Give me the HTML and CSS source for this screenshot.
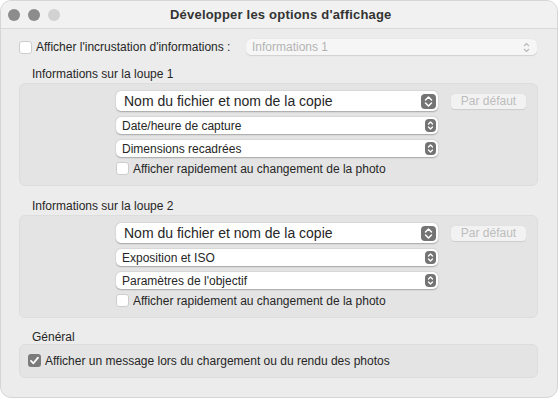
FILE: index.html
```html
<!DOCTYPE html>
<html>
<head>
    <title>Développer les options d'affichage</title>
    <link rel="stylesheet" href="styles.css">
</head>
<body>
    <div class="window">
        <div class="titlebar">
            <div class="lights">
                <span class="light dark"></span>
                <span class="light dark"></span>
                <span class="light pale"></span>
            </div>
            <div class="title">Développer les options d'affichage</div>
        </div>

        <div class="content">
            <div class="overlay-row">
                <span class="check"></span>
                <span class="overlay-label">Afficher l'incrustation d'informations :</span>
                <div class="popup disabled">
                    <span>Informations 1</span>
                    <svg class="arrows" width="9" height="11" viewBox="0 0 9 11"><path d="M2 4 L4.5 1.5 L7 4 M2 7 L4.5 9.5 L7 7" fill="none" stroke="#b8b8b8" stroke-width="1.2"/></svg>
                </div>
            </div>

            <div class="group-label">Informations sur la loupe 1</div>
            <div class="group-box loupe">
                <div class="row">
                    <div class="popup large">
                        <span>Nom du fichier et nom de la copie</span>
                        <span class="stepper big"><svg width="15" height="15" viewBox="0 0 15 15"><path d="M4.5 6 L7.5 3 L10.5 6 M4.5 9 L7.5 12 L10.5 9" fill="none" stroke="#fff" stroke-width="1.5" stroke-linecap="round" stroke-linejoin="round"/></svg></span>
                    </div>
                    <div class="btn-default">Par défaut</div>
                </div>
                <div class="popup small">
                    <span>Date/heure de capture</span>
                    <span class="stepper"><svg width="11" height="13" viewBox="0 0 11 13"><path d="M3.5 5 L5.5 3 L7.5 5 M3.5 8 L5.5 10 L7.5 8" fill="none" stroke="#fff" stroke-width="1.3" stroke-linecap="round" stroke-linejoin="round"/></svg></span>
                </div>
                <div class="popup small">
                    <span>Dimensions recadrées</span>
                    <span class="stepper"><svg width="11" height="13" viewBox="0 0 11 13"><path d="M3.5 5 L5.5 3 L7.5 5 M3.5 8 L5.5 10 L7.5 8" fill="none" stroke="#fff" stroke-width="1.3" stroke-linecap="round" stroke-linejoin="round"/></svg></span>
                </div>
                <div class="check-row">
                    <span class="check"></span>
                    <span>Afficher rapidement au changement de la photo</span>
                </div>
            </div>

            <div class="group-label second">Informations sur la loupe 2</div>
            <div class="group-box loupe">
                <div class="row">
                    <div class="popup large">
                        <span>Nom du fichier et nom de la copie</span>
                        <span class="stepper big"><svg width="15" height="15" viewBox="0 0 15 15"><path d="M4.5 6 L7.5 3 L10.5 6 M4.5 9 L7.5 12 L10.5 9" fill="none" stroke="#fff" stroke-width="1.5" stroke-linecap="round" stroke-linejoin="round"/></svg></span>
                    </div>
                    <div class="btn-default">Par défaut</div>
                </div>
                <div class="popup small">
                    <span>Exposition et ISO</span>
                    <span class="stepper"><svg width="11" height="13" viewBox="0 0 11 13"><path d="M3.5 5 L5.5 3 L7.5 5 M3.5 8 L5.5 10 L7.5 8" fill="none" stroke="#fff" stroke-width="1.3" stroke-linecap="round" stroke-linejoin="round"/></svg></span>
                </div>
                <div class="popup small">
                    <span>Paramètres de l'objectif</span>
                    <span class="stepper"><svg width="11" height="13" viewBox="0 0 11 13"><path d="M3.5 5 L5.5 3 L7.5 5 M3.5 8 L5.5 10 L7.5 8" fill="none" stroke="#fff" stroke-width="1.3" stroke-linecap="round" stroke-linejoin="round"/></svg></span>
                </div>
                <div class="check-row">
                    <span class="check"></span>
                    <span>Afficher rapidement au changement de la photo</span>
                </div>
            </div>

            <div class="group-label general-label">Général</div>
            <div class="group-box general">
                <div class="check-row">
                    <span class="check checked"><svg width="13" height="13" viewBox="0 0 13 13"><path d="M3 6.8 L5.4 9.3 L10 3.6" fill="none" stroke="#fff" stroke-width="1.8" stroke-linecap="round" stroke-linejoin="round"/></svg></span>
                    <span>Afficher un message lors du chargement ou du rendu des photos</span>
                </div>
            </div>
        </div>
    </div>
</body>
</html>
```

FILE: styles.css
```css
body {
    margin: 0;
    background-color: #fff;
    font-family: "Liberation Sans", Arial, sans-serif;
    font-size: 12px;
    color: #262626;
}
.window {
    width: 558px;
    height: 398px;
    background-color: #ececec;
    border-radius: 11px;
    overflow: hidden;
    box-sizing: border-box;
    border: 1px solid #d6d6d6;
}
.titlebar {
    height: 27px;
    display: flex;
    align-items: center;
    background-color: #f1f1f1;
    border-bottom: 1px solid #d9d9d9;
}
.lights {
    display: flex;
    gap: 8px;
    padding-left: 7px;
    width: 140px;
}
.light {
    width: 12px;
    height: 12px;
    border-radius: 50%;
}
.light.dark {
    background-color: #8c8c8c;
}
.light.pale {
    background-color: #d2d2d2;
}
.title {
    font-weight: bold;
    font-size: 13px;
    color: #333;
    padding-left: 22px;
    letter-spacing: 0.2px;
}
.content {
    padding: 10px 19px 0 18px;
}
.overlay-row {
    display: flex;
    align-items: center;
    height: 16px;
}
.overlay-label {
    margin-left: 4px;
    width: 210px;
}
.check {
    width: 11px;
    height: 11px;
    background-color: #fff;
    border: 1px solid #cdcdcd;
    border-radius: 3px;
    flex-shrink: 0;
    display: inline-flex;
}
.check.checked {
    width: 13px;
    height: 13px;
    border: none;
    background-color: #7b7b7b;
}
.popup {
    display: flex;
    align-items: center;
    justify-content: space-between;
    box-sizing: border-box;
    background-color: #fff;
    border-radius: 5px;
    box-shadow: 0 0.5px 1.5px rgba(0, 0, 0, 0.28);
}
.popup.disabled {
    width: 291px;
    height: 16px;
    background-color: #f6f6f6;
    color: #b4b4b4;
    padding: 0 6px 0 6px;
    box-shadow: 0 0.5px 1px rgba(0, 0, 0, 0.12);
}
.group-label {
    margin: 12px 0 1px 13px;
    line-height: 15px;
}
.group-label.second {
    margin-top: 13px;
}
.group-label.general-label {
    margin-top: 13px;
    margin-bottom: 0;
    line-height: 13px;
}
.group-box {
    background-color: #e4e4e4;
    border: 1px solid #dddddd;
    border-radius: 6px;
}
.loupe {
    padding: 7px 0 10px 96px;
}
.row {
    display: flex;
    align-items: center;
    gap: 13px;
}
.popup.large {
    width: 322px;
    height: 20px;
    font-size: 14px;
    padding: 0 2px 0 8px;
}
.popup.small {
    width: 322px;
    height: 17px;
    margin-top: 6px;
    padding: 0 2px 0 6px;
}
.stepper {
    display: flex;
    background-color: #747474;
    border-radius: 4px;
}
.btn-default {
    width: 75px;
    height: 15px;
    line-height: 15px;
    text-align: center;
    background-color: #f2f2f2;
    color: #bdbdbd;
    border-radius: 4px;
    box-shadow: 0 0.5px 1px rgba(0, 0, 0, 0.1);
}
.check-row {
    display: flex;
    align-items: center;
    gap: 4px;
    margin-top: 5px;
    height: 13px;
}
.general {
    padding: 9px 0 10px 8px;
}
.general .check-row {
    margin-top: 0;
}
```
